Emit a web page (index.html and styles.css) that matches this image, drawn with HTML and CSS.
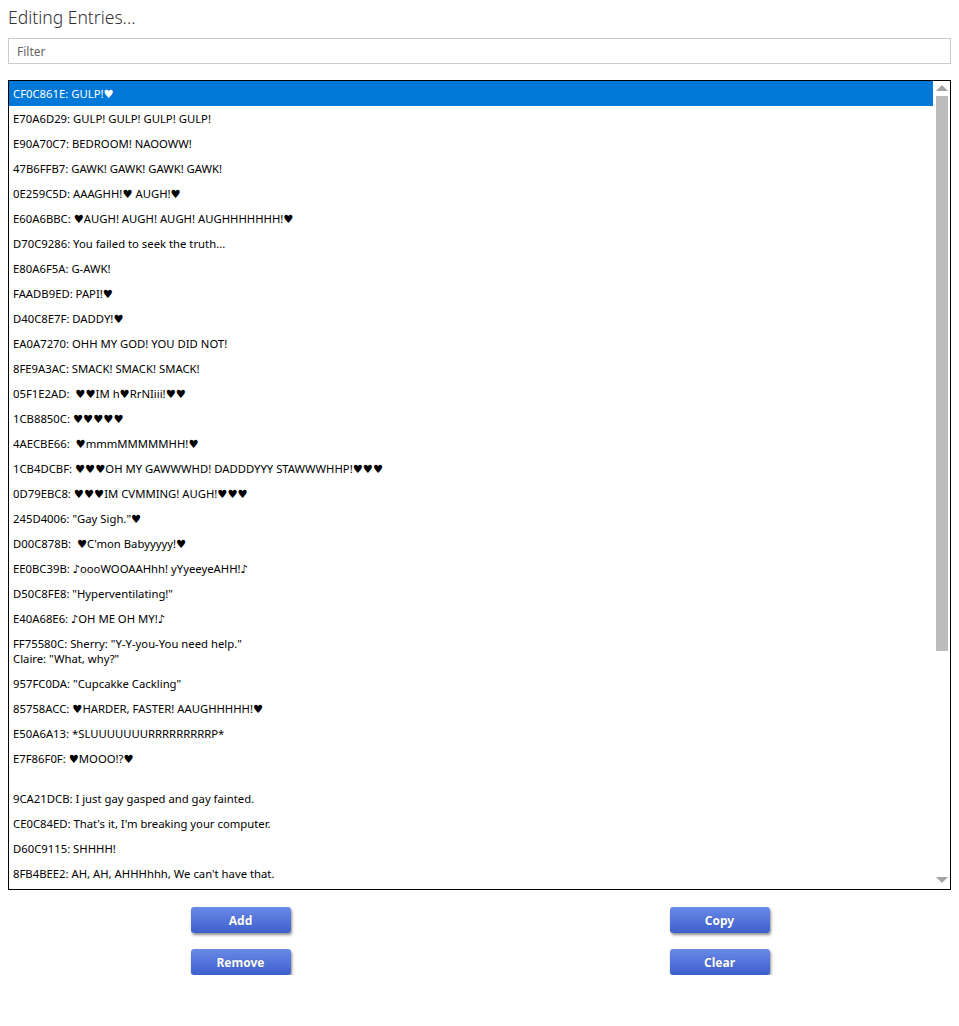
FILE: index.html
```html
<!DOCTYPE html>
<html>
<head>
<meta charset="utf-8">
<link rel="stylesheet" href="styles.css">
</head>
<body>
<div class="page">
  <div class="title">Editing Entries...</div>
  <input class="filter" type="text" placeholder="Filter">
  <div class="listbox">
    <div class="items">
      <div class="item selected">CF0C861E: GULP!♥</div>
      <div class="item">E70A6D29: GULP! GULP! GULP! GULP!</div>
      <div class="item">E90A70C7: BEDROOM! NAOOWW!</div>
      <div class="item">47B6FFB7: GAWK! GAWK! GAWK! GAWK!</div>
      <div class="item">0E259C5D: AAAGHH!♥ AUGH!♥</div>
      <div class="item">E60A6BBC: ♥AUGH! AUGH! AUGH! AUGHHHHHHH!♥</div>
      <div class="item">D70C9286: You failed to seek the truth...</div>
      <div class="item">E80A6F5A: G-AWK!</div>
      <div class="item">FAADB9ED: PAPI!♥</div>
      <div class="item">D40C8E7F: DADDY!♥</div>
      <div class="item">EA0A7270: OHH MY GOD! YOU DID NOT!</div>
      <div class="item">8FE9A3AC: SMACK! SMACK! SMACK!</div>
      <div class="item">05F1E2AD:  ♥♥IM h♥RrNIiii!♥♥</div>
      <div class="item">1CB8850C: ♥♥♥♥♥</div>
      <div class="item">4AECBE66:  ♥mmmMMMMMHH!♥</div>
      <div class="item">1CB4DCBF: ♥♥♥OH MY GAWWWHD! DADDDYYY STAWWWHHP!♥♥♥</div>
      <div class="item">0D79EBC8: ♥♥♥IM CVMMING! AUGH!♥♥♥</div>
      <div class="item">245D4006: "Gay Sigh."♥</div>
      <div class="item">D00C878B:  ♥C'mon Babyyyyy!♥</div>
      <div class="item">EE0BC39B: ♪oooWOOAAHhh! yYyeeyeAHH!♪</div>
      <div class="item">D50C8FE8: "Hyperventilating!"</div>
      <div class="item">E40A68E6: ♪OH ME OH MY!♪</div>
      <div class="item">FF75580C: Sherry: "Y-Y-you-You need help."
Claire: "What, why?"</div>
      <div class="item">957FC0DA: "Cupcakke Cackling"</div>
      <div class="item">85758ACC: ♥HARDER, FASTER! AAUGHHHHH!♥</div>
      <div class="item">E50A6A13: *SLUUUUUUURRRRRRRRRP*</div>
      <div class="item">E7F86F0F: ♥MOOO!?♥</div>
      <div class="item">
9CA21DCB: I just gay gasped and gay fainted.</div>
      <div class="item">CE0C84ED: That's it, I'm breaking your computer.</div>
      <div class="item">D60C9115: SHHHH!</div>
      <div class="item">8FB4BEE2: AH, AH, AHHHhhh, We can't have that.</div>
    </div>
    <div class="scrollbar">
      <div class="arrow up"></div>
      <div class="track"><div class="thumb"></div></div>
      <div class="arrow down"></div>
    </div>
  </div>
  <div class="buttons">
    <button class="btn">Add</button>
    <button class="btn right">Copy</button>
    <button class="btn">Remove</button>
    <button class="btn right">Clear</button>
  </div>
</div>
</body>
</html>
```
FILE: styles.css
```css
html, body {
  margin: 0;
  padding: 0;
  background: #fff;
}
body {
  font-family: "Noto Sans", "DejaVu Sans", sans-serif;
  color: #000;
}
.page {
  padding: 6px 8px 0 8px;
  display: flex;
  flex-direction: column;
}
.title {
  font-size: 17.5px;
  font-weight: 300;
  color: #333;
  line-height: 22px;
  height: 22px;
}
.filter {
  margin-top: 10px;
  box-sizing: border-box;
  width: 100%;
  height: 26px;
  border: 1px solid #ccc;
  padding: 0 8px;
  font-family: inherit;
  font-size: 12px;
  outline: none;
}
.filter::placeholder {
  color: #666;
}
.listbox {
  margin-top: 16px;
  height: 810px;
  box-sizing: border-box;
  border: 1px solid #000;
  display: flex;
  overflow: hidden;
}
.items {
  flex: 1;
  overflow: hidden;
  font-size: 11.3px;
}
.item {
  white-space: pre;
  line-height: 15px;
  padding: 5px 4px;
}
.item.selected {
  background: #0078d7;
  color: #fff;
}
.scrollbar {
  width: 15px;
  display: flex;
  flex-direction: column;
  align-items: center;
  padding: 0 1px;
}
.arrow {
  width: 0;
  height: 0;
  border-left: 6px solid transparent;
  border-right: 6px solid transparent;
}
.arrow.up {
  margin-top: 4px;
  border-bottom: 6px solid #a3a3a3;
}
.arrow.down {
  margin-bottom: 6px;
  border-top: 6px solid #a3a3a3;
}
.track {
  flex: 1;
  width: 12px;
  padding-top: 5px;
  padding-bottom: 6px;
}
.thumb {
  width: 12px;
  height: 555px;
  background: #bcbcbc;
}
.buttons {
  margin-top: 17px;
  display: grid;
  grid-template-columns: 1fr 1fr;
  column-gap: 13px;
  row-gap: 16px;
  justify-items: center;
}
.btn {
  width: 100px;
  height: 26px;
  border: none;
  border-radius: 3px;
  background: linear-gradient(#6a8ae6, #3d5fcd);
  color: #fff;
  font-family: "Noto Sans", "DejaVu Sans", sans-serif;
  font-weight: 700;
  font-size: 12px;
  box-shadow: 1px 2px 3px rgba(0,0,0,0.45);
  text-shadow: 0 0 1px rgba(0,0,0,0.3);
}
.btn.right {
  margin-left: 2px;
}
```
